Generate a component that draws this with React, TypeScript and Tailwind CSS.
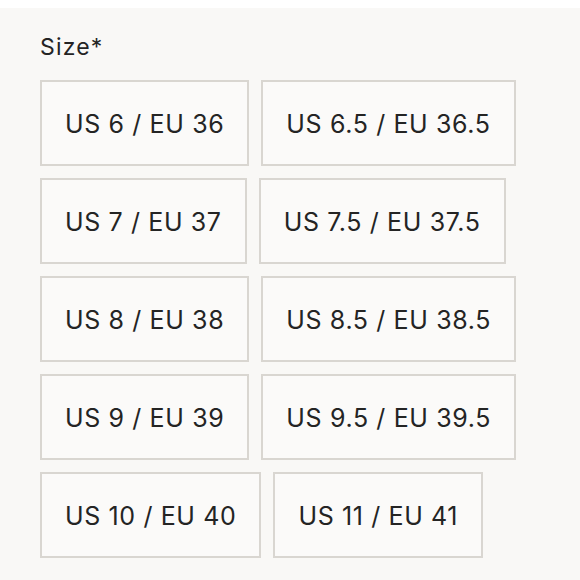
const sizes = [
  ["US 6 / EU 36", "US 6.5 / EU 36.5"],
  ["US 7 / EU 37", "US 7.5 / EU 37.5"],
  ["US 8 / EU 38", "US 8.5 / EU 38.5"],
  ["US 9 / EU 39", "US 9.5 / EU 39.5"],
  ["US 10 / EU 40", "US 11 / EU 41"],
];

export default function App() {
  return (
    <div className="min-h-[580px] bg-white pt-2" style={{ fontFamily: "Inter, 'Liberation Sans', sans-serif" }}>
      <div className="min-h-[572px] bg-[#f9f8f6] pl-10 pt-6 text-[#242424]">
        <p className="text-[23px] leading-[30px] tracking-[0.05em]">Size*</p>
        <div className="mt-[18px] flex flex-col gap-3">
          {sizes.map((row, i) => (
            <div key={i} className="flex gap-3">
              {row.map((s) => (
                <button
                  key={s}
                  className="flex h-[86px] items-center border-2 border-[#d9d6d1] bg-[#fbfaf9] px-[23px] pt-[3px] text-[25px] tracking-[0.025em]"
                >
                  {s}
                </button>
              ))}
            </div>
          ))}
        </div>
      </div>
    </div>
  );
}
